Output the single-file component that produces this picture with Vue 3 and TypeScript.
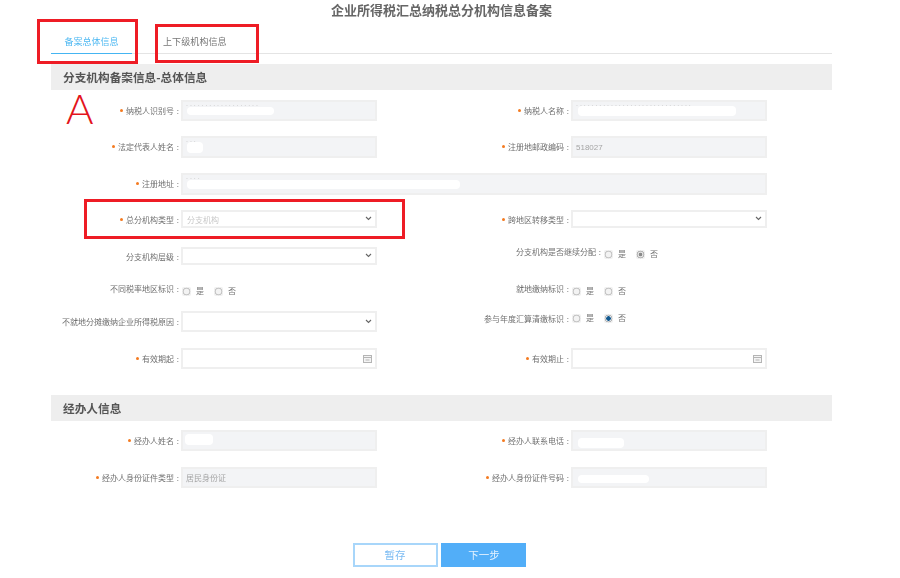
<script setup lang="ts">
type Blob = { x: number; y: number; w: number; h: number };
type Opt = { text: string; on?: 'grey' | 'blue' };
type Field = {
  label: string;
  star?: boolean;
  kind: 'text' | 'select' | 'date' | 'radio';
  value?: string;
  placeholder?: string;
  wide?: boolean;
  low?: boolean;
  tall?: boolean;
  shift?: boolean;
  up?: boolean;
  blob?: Blob;
  specks?: string;
  options?: Opt[];
};

const yesNo = (on?: 'grey' | 'blue'): Opt[] => [{ text: '是' }, { text: '否', on }];

const mainFields: Field[] = [
  { label: '纳税人识别号', star: true, kind: 'text', blob: { x: 4, y: 5, w: 87, h: 8 }, specks: '. . . . . . . . . . . . . . . . . . .' },
  { label: '纳税人名称', star: true, kind: 'text', blob: { x: 5, y: 4, w: 158, h: 10 }, specks: '. . . . . . . . . . . . . . . . . . . . . . . . . . . . . .' },
  { label: '法定代表人姓名', star: true, kind: 'text', tall: true, blob: { x: 4, y: 4, w: 16, h: 11 }, specks: '. . .' },
  { label: '注册地邮政编码', star: true, kind: 'text', value: '518027', tall: true },
  { label: '注册地址', star: true, kind: 'text', wide: true, tall: true, blob: { x: 4, y: 5, w: 273, h: 9 }, specks: '. . . .' },
  { label: '总分机构类型', star: true, kind: 'select', placeholder: '分支机构', low: true },
  { label: '跨地区转移类型', star: true, kind: 'select', low: true },
  { label: '分支机构层级', kind: 'select', low: true },
  { label: '分支机构是否继续分配', kind: 'radio', shift: true, up: true, options: yesNo('grey') },
  { label: '不同税率地区标识', kind: 'radio', options: yesNo() },
  { label: '就地缴纳标识', kind: 'radio', options: yesNo() },
  { label: '不就地分摊缴纳企业所得税原因', kind: 'select' },
  { label: '参与年度汇算清缴标识', kind: 'radio', up: true, options: yesNo('blue') },
  { label: '有效期起', star: true, kind: 'date' },
  { label: '有效期止', star: true, kind: 'date' },
];

const agentFields: Field[] = [
  { label: '经办人姓名', star: true, kind: 'text', blob: { x: 2, y: 2, w: 28, h: 11 } },
  { label: '经办人联系电话', star: true, kind: 'text', blob: { x: 5, y: 6, w: 46, h: 10 } },
  { label: '经办人身份证件类型', star: true, kind: 'text', value: '居民身份证' },
  { label: '经办人身份证件号码', star: true, kind: 'text', blob: { x: 5, y: 6, w: 71, h: 8 } },
];

function blobStyle(b: Blob) {
  return { left: b.x + 'px', top: b.y + 'px', width: b.w + 'px', height: b.h + 'px' };
}
</script>

<template>
  <div class="canvas">
    <div class="page">
      <h1 class="title">企业所得税汇总纳税总分机构信息备案</h1>
      <div class="tabs">
        <div class="tab active">备案总体信息</div>
        <div class="tab">上下级机构信息</div>
      </div>

      <h2 class="head first">分支机构备案信息-总体信息</h2>
      <div class="grid main-grid">
        <div
          v-for="f in mainFields"
          :key="f.label"
          class="field"
          :class="{ wide: f.wide, 'is-radio': f.kind === 'radio', shift: f.shift, up: f.up, low: f.low }"
        >
          <label class="label">
            <i v-if="f.star" class="star"></i>{{ f.label }}<span class="colon">:</span>
          </label>
          <div v-if="f.kind === 'radio'" class="radios">
            <span v-for="o in f.options" :key="o.text" class="radio-item">
              <span class="radio" :class="o.on"></span>{{ o.text }}
            </span>
          </div>
          <div
            v-else
            class="input"
            :class="[f.kind, { low: f.low, tall: f.tall }]"
          >
            <span v-if="f.value" class="val">{{ f.value }}</span>
            <span v-if="f.placeholder" class="ph">{{ f.placeholder }}</span>
            <span v-if="f.specks" class="specks">{{ f.specks }}</span>
            <span v-if="f.blob" class="blob" :style="blobStyle(f.blob)"></span>
            <svg v-if="f.kind === 'select'" class="chev" viewBox="0 0 7 5" width="7" height="5">
              <path d="M1 1l2.5 2.5L6 1" fill="none" stroke="#666" stroke-width="1.1" />
            </svg>
            <svg v-if="f.kind === 'date'" class="cal" viewBox="0 0 9 8" width="9" height="8">
              <rect x=".5" y=".5" width="8" height="7" fill="#f4f4f4" stroke="#b5b5b5" />
              <path d="M.5 2.5h8M2.5 5h4" stroke="#b5b5b5" fill="none" />
            </svg>
          </div>
        </div>
      </div>

      <h2 class="head">经办人信息</h2>
      <div class="grid agent-grid">
        <div v-for="f in agentFields" :key="f.label" class="field">
          <label class="label"><i class="star"></i>{{ f.label }}<span class="colon">:</span></label>
          <div class="input text">
            <span v-if="f.value" class="val">{{ f.value }}</span>
            <span v-if="f.specks" class="specks">{{ f.specks }}</span>
            <span v-if="f.blob" class="blob" :style="blobStyle(f.blob)"></span>
          </div>
        </div>
      </div>

      <div class="actions">
        <button class="btn ghost" type="button">暂存</button>
        <button class="btn solid" type="button">下一步</button>
      </div>
    </div>

    <div class="mark m1"></div>
    <div class="mark m2"></div>
    <div class="mark m3"></div>
    <div class="letter">A</div>
  </div>
</template>

<style scoped>
.canvas {
  position: relative;
  width: 900px;
  height: 578px;
  overflow: hidden;
  background: #fff;
  font-family: "Noto Sans CJK SC", "Liberation Sans", sans-serif;
}
.page {
  width: 781px;
  margin-left: 51px;
  filter: blur(0.35px);
}
.title {
  margin: 0;
  height: 20px;
  line-height: 20px;
  font-size: 13px;
  font-weight: 700;
  color: #666;
  text-align: center;
  white-space: nowrap;
}
.tabs {
  display: flex;
  height: 34px;
  border-bottom: 1px solid #e4e4e4;
  box-sizing: border-box;
}
.tab {
  height: 34px;
  box-sizing: border-box;
  padding-top: 13px;
  line-height: 16px;
  font-size: 9.1px;
  color: #777;
  margin-left: 31px;
}
.tab.active {
  width: 81px;
  margin-left: 0;
  padding-top: 14px;
  text-align: center;
  font-size: 9px;
  color: #4db8f2;
  border-bottom: 1.5px solid #45b5f2;
}
.head {
  margin: 0;
  height: 26px;
  line-height: 26px;
  padding-left: 12px;
  background: #eee;
  font-size: 11.67px;
  font-weight: 700;
  color: #555;
}
.head.first {
  margin-top: 10px;
}
.grid {
  display: grid;
  grid-template-columns: 390px 390px;
  align-items: start;
}
.main-grid {
  padding-top: 10px;
  grid-template-rows: 36px 37px 37px 37px 35px 29px 37px 47px;
}
.agent-grid {
  padding-top: 9px;
  grid-template-rows: 37px 22px;
}
.field {
  display: flex;
  align-items: center;
}
.field.wide {
  grid-column: 1 / 3;
}
.field.low .label {
  padding-top: 2px;
}
.label {
  flex: none;
  width: 130px;
  box-sizing: border-box;
  padding-right: 2px;
  text-align: right;
  font-size: 8px;
  line-height: 12px;
  color: #707070;
  white-space: nowrap;
}
.field.shift .label {
  width: 162px;
}
.star {
  display: inline-block;
  width: 3px;
  height: 3px;
  margin-right: 3px;
  border-radius: 50%;
  background: #f47a20;
  vertical-align: 2px;
}
.colon {
  display: inline-block;
  width: 5px;
  text-align: right;
}
.input {
  position: relative;
  flex: none;
  width: 196px;
  height: 21px;
  box-sizing: border-box;
  border: 2px solid #efefef;
  background: #fff;
}
.field.wide .input {
  width: 586px;
}
.input.tall {
  height: 22px;
}
.input.low {
  height: 18px;
}
.input.text {
  background: #f3f4f6;
}
.val,
.ph {
  position: absolute;
  left: 3px;
  top: 0;
  bottom: 0;
  display: flex;
  align-items: center;
  font-family: "Liberation Sans", "Noto Sans CJK SC", sans-serif;
  font-size: 8px;
  color: #a5a5a5;
}
.ph {
  left: 4px;
  color: #c8c8c8;
}
.specks {
  position: absolute;
  left: 3px;
  top: -3px;
  font-family: "Liberation Sans", sans-serif;
  font-size: 7px;
  line-height: 10px;
  color: #c4c4c4;
  white-space: nowrap;
}
.blob {
  position: absolute;
  background: #fff;
  border-radius: 4px;
}
.chev {
  position: absolute;
  right: 3px;
  top: 50%;
  margin-top: -3px;
}
.cal {
  position: absolute;
  right: 3px;
  top: 50%;
  margin-top: -4px;
}
.field.is-radio {
  align-items: flex-start;
  padding-top: 1px;
}
.field.up {
  margin-top: -1px;
  padding-top: 0;
}
.field.up:not(.shift) .label {
  padding-top: 3px;
}
.radios {
  display: flex;
  margin-left: 1px;
  padding-top: 3px;
}
.radio-item {
  display: flex;
  align-items: center;
  width: 32px;
  font-size: 8px;
  line-height: 10px;
  color: #707070;
}
.radio {
  flex: none;
  width: 9px;
  height: 9px;
  margin-right: 5px;
  box-sizing: border-box;
  border-radius: 2px;
  background: radial-gradient(circle, #f3f3f3 0 2.6px, #c6c6c6 3.1px 3.6px, #efefef 4.1px);
}
.radio.grey {
  background: radial-gradient(circle, #8a8a8a 0 1.6px, #e6e6e6 2.1px 2.7px, #b5b5b5 3.1px 3.7px, #efefef 4.1px);
}
.radio.blue {
  background: radial-gradient(circle, #12598f 0 2px, #dfe7ee 2.5px 2.9px, #b5b5b5 3.2px 3.7px, #efefef 4.1px);
}
.actions {
  display: flex;
  justify-content: center;
  gap: 3px;
  margin-top: 54px;
  padding-right: 5px;
}
.btn {
  width: 85px;
  height: 24px;
  padding: 0;
  box-sizing: border-box;
  font-family: inherit;
  font-size: 10.5px;
  line-height: 1;
  border-radius: 0;
}
.btn.ghost {
  border: 2px solid #a8d6fa;
  background: #fff;
  color: #7dbcf3;
}
.btn.solid {
  border: 0;
  padding-left: 2px;
  background: #52aef8;
  color: #e4f2fe;
}
.mark {
  position: absolute;
  box-sizing: border-box;
  border: 3px solid #ee1c25;
}
.m1 {
  left: 37px;
  top: 19px;
  width: 101px;
  height: 45px;
}
.m2 {
  left: 155px;
  top: 24px;
  width: 104px;
  height: 39px;
}
.m3 {
  left: 84px;
  top: 199px;
  width: 321px;
  height: 40px;
}
.letter {
  position: absolute;
  left: 66px;
  top: 84px;
  font-family: Lato, "Liberation Sans", sans-serif;
  font-weight: 300;
  font-size: 42px;
  line-height: 48px;
  color: #e3141c;
}
</style>
